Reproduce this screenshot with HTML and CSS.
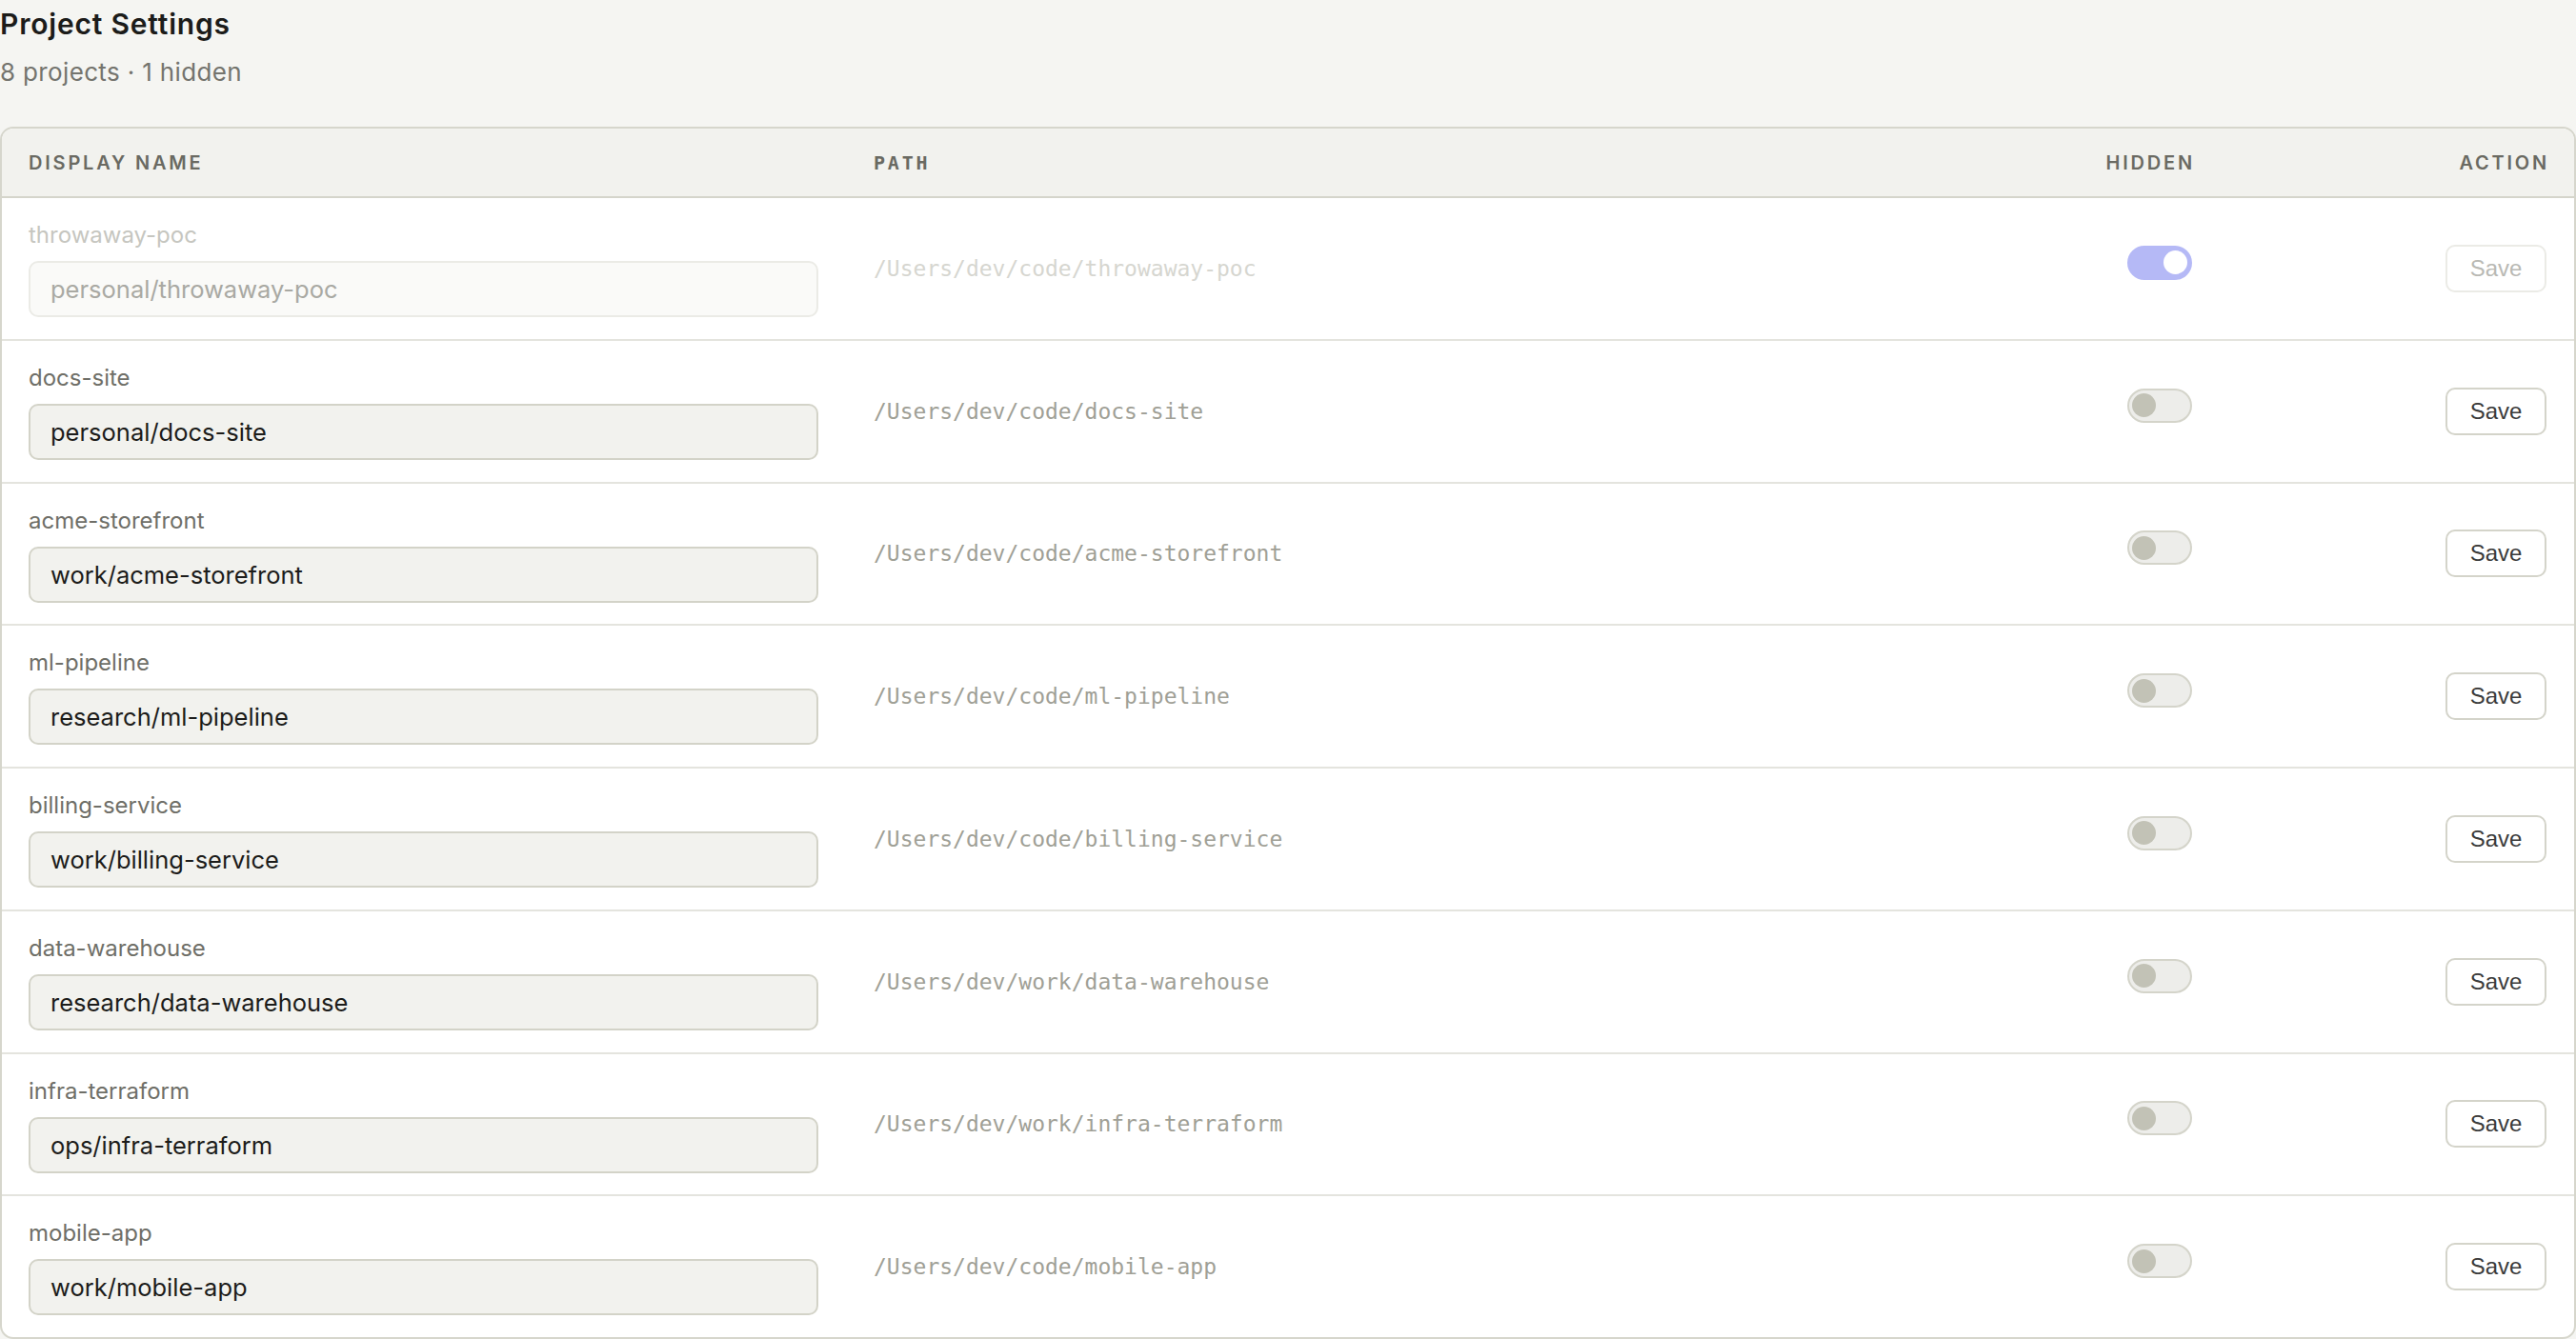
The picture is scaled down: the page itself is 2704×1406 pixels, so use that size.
FILE: index.html
```html
<!DOCTYPE html>
<html>
<head>
    <title>Project Settings</title>
    <link rel="stylesheet" href="styles.css">
</head>
<body>
    <h1 class="page-title">Project Settings</h1>
    <p class="page-sub">8 projects · 1 hidden</p>

    <div class="card">
        <div class="row head">
            <div class="cell name">Display Name</div>
            <div class="cell path">Path</div>
            <div class="cell hidden-col">Hidden</div>
            <div class="cell action">Action</div>
        </div>

        <div class="row is-hidden">
            <div class="cell name">
                <div class="label">throwaway-poc</div>
                <input class="name-input" type="text" value="personal/throwaway-poc">
            </div>
            <div class="cell path">/Users/dev/code/throwaway-poc</div>
            <div class="cell hidden-col"><span class="toggle on"></span></div>
            <div class="cell action"><button class="save-btn" disabled>Save</button></div>
        </div>

        <div class="row">
            <div class="cell name">
                <div class="label">docs-site</div>
                <input class="name-input" type="text" value="personal/docs-site">
            </div>
            <div class="cell path">/Users/dev/code/docs-site</div>
            <div class="cell hidden-col"><span class="toggle"></span></div>
            <div class="cell action"><button class="save-btn">Save</button></div>
        </div>

        <div class="row">
            <div class="cell name">
                <div class="label">acme-storefront</div>
                <input class="name-input" type="text" value="work/acme-storefront">
            </div>
            <div class="cell path">/Users/dev/code/acme-storefront</div>
            <div class="cell hidden-col"><span class="toggle"></span></div>
            <div class="cell action"><button class="save-btn">Save</button></div>
        </div>

        <div class="row">
            <div class="cell name">
                <div class="label">ml-pipeline</div>
                <input class="name-input" type="text" value="research/ml-pipeline">
            </div>
            <div class="cell path">/Users/dev/code/ml-pipeline</div>
            <div class="cell hidden-col"><span class="toggle"></span></div>
            <div class="cell action"><button class="save-btn">Save</button></div>
        </div>

        <div class="row">
            <div class="cell name">
                <div class="label">billing-service</div>
                <input class="name-input" type="text" value="work/billing-service">
            </div>
            <div class="cell path">/Users/dev/code/billing-service</div>
            <div class="cell hidden-col"><span class="toggle"></span></div>
            <div class="cell action"><button class="save-btn">Save</button></div>
        </div>

        <div class="row">
            <div class="cell name">
                <div class="label">data-warehouse</div>
                <input class="name-input" type="text" value="research/data-warehouse">
            </div>
            <div class="cell path">/Users/dev/work/data-warehouse</div>
            <div class="cell hidden-col"><span class="toggle"></span></div>
            <div class="cell action"><button class="save-btn">Save</button></div>
        </div>

        <div class="row">
            <div class="cell name">
                <div class="label">infra-terraform</div>
                <input class="name-input" type="text" value="ops/infra-terraform">
            </div>
            <div class="cell path">/Users/dev/work/infra-terraform</div>
            <div class="cell hidden-col"><span class="toggle"></span></div>
            <div class="cell action"><button class="save-btn">Save</button></div>
        </div>

        <div class="row">
            <div class="cell name">
                <div class="label">mobile-app</div>
                <input class="name-input" type="text" value="work/mobile-app">
            </div>
            <div class="cell path">/Users/dev/code/mobile-app</div>
            <div class="cell hidden-col"><span class="toggle"></span></div>
            <div class="cell action"><button class="save-btn">Save</button></div>
        </div>
    </div>
</body>
</html>
```

FILE: styles.css
```css
body {
    margin: 0;
    background-color: #f5f5f2;
    color: #1c1c1a;
    font-family: Inter, "Noto Sans", sans-serif;
}

.page-title {
    margin: 7px 0 0;
    font-size: 30px;
    line-height: 36px;
    font-weight: 600;
    letter-spacing: 0.8px;
}

.page-sub {
    margin: 17px 0 0;
    font-size: 26px;
    line-height: 31px;
    letter-spacing: 0.35px;
    color: #74746e;
}

.card {
    margin-top: 42px;
    background-color: #fff;
    border: 2px solid #d6d6cc;
    border-radius: 14px;
    overflow: hidden;
}

.row {
    display: grid;
    grid-template-columns: 885px 1fr 200px 372px;
    align-items: center;
    border-bottom: 2px solid #e4e4de;
}

.row:last-child {
    border-bottom: none;
}

.cell {
    padding: 0 30px;
}

.cell.name {
    padding-left: 28px;
    padding-right: 28px;
}

.cell.hidden-col,
.cell.action {
    display: flex;
    justify-content: flex-end;
    padding-right: 29px;
}

/* header */
.row.head {
    height: 71px;
    background-color: #f2f2ee;
    border-bottom-color: #d5d5cb;
}

.row.head .cell {
    font-size: 20px;
    font-weight: 600;
    letter-spacing: 2.8px;
    text-transform: uppercase;
    color: #6a6a62;
}

.row.head .cell.hidden-col,
.row.head .cell.action {
    padding-right: 26px;
}

/* name column */
.row .cell.name {
    padding-top: 25px;
    padding-bottom: 22.75px;
}

.row.head .cell.name {
    padding-top: 0;
    padding-bottom: 0;
}

.label {
    font-size: 24px;
    line-height: 28px;
    color: #6f6f68;
    margin-bottom: 13px;
}

.name-input {
    display: block;
    box-sizing: border-box;
    width: 100%;
    height: 59px;
    padding: 0 21px;
    border: 2px solid #d3d3c8;
    border-radius: 10px;
    background-color: #f2f2ee;
    font-family: Inter, "Noto Sans", sans-serif;
    font-size: 25.5px;
    color: #1c1c1a;
    outline: none;
}

/* path column */
.cell.path {
    font-family: "DejaVu Sans Mono", "Liberation Mono", monospace;
    font-size: 23px;
    color: #a0a096;
}

/* toggle */
.toggle {
    position: relative;
    display: block;
    box-sizing: border-box;
    width: 68px;
    height: 36px;
    margin-bottom: 12px;
    border: 2px solid #d4d4ca;
    border-radius: 18px;
    background-color: #ededea;
}

.toggle::after {
    content: "";
    position: absolute;
    top: 3.5px;
    left: 3px;
    width: 25px;
    height: 25px;
    border-radius: 50%;
    background-color: #c2c2b6;
}

.toggle.on {
    background-color: #b5b9f6;
    border-color: #b5b9f6;
}

.toggle.on::after {
    left: auto;
    right: 3px;
    background-color: #fff;
}

/* save button */
.save-btn {
    width: 106px;
    height: 50px;
    border: 2px solid #d4d4ca;
    border-radius: 10px;
    background-color: #fff;
    font-family: "Liberation Sans", Arial, sans-serif;
    font-size: 24px;
    color: #3b3b3b;
    cursor: pointer;
}

/* hidden project row */
.row.is-hidden .label {
    color: #c6c6c0;
}

.row.is-hidden .name-input {
    background-color: #fafaf8;
    border-color: #ebebe6;
    color: #a9a9a3;
}

.row.is-hidden .cell.path {
    color: #d6d6d0;
}

.row.is-hidden .save-btn {
    border-color: #ebebe6;
    color: #b9b9b4;
    cursor: default;
}
```
